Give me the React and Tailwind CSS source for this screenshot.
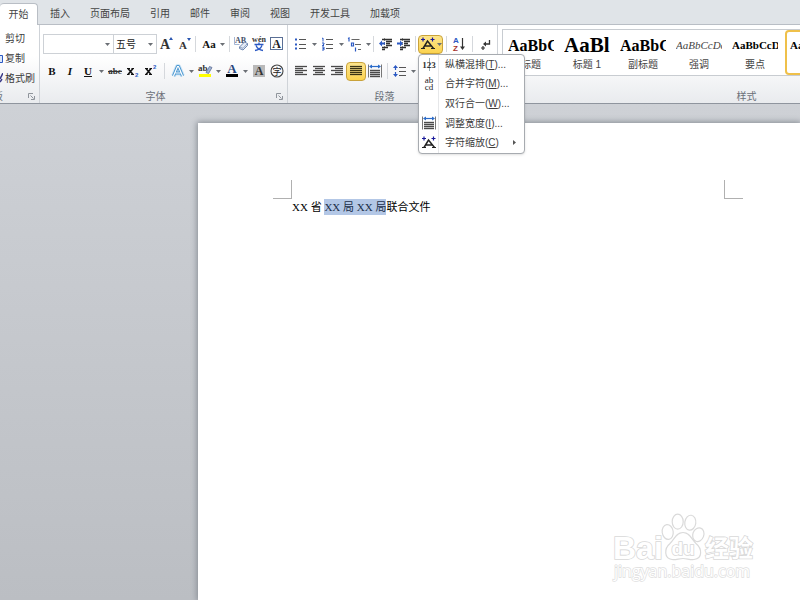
import React from "react";

const SERIF = "font-['Liberation_Serif','Noto_Sans_CJK_SC',serif]";

function Caret({ className = "" }) {
  return (
    <svg className={`shrink-0 ${className}`} width="5" height="3" viewBox="0 0 5 3" aria-hidden="true">
      <path d="M0 0h5L2.5 3z" fill="#6b6f75" />
    </svg>
  );
}

function Tool({ label, caret, className = "", children }) {
  return (
    <button type="button" aria-label={label} className={`flex h-5 shrink-0 items-center ${className}`}>
      <span className="flex w-[18px] items-center justify-center">{children}</span>
      {caret && (
        <span className="flex w-[9px] justify-center">
          <Caret />
        </span>
      )}
    </button>
  );
}

function Sep({ className = "mx-[3px]" }) {
  return <span className={`h-4 w-px shrink-0 bg-[#d5d8dc] ${className}`} />;
}

function Launcher() {
  return (
    <button type="button" aria-label="更多选项" className="shrink-0">
      <svg width="7" height="7" viewBox="0 0 7 7" fill="none" stroke="#8f949b">
        <path d="M.5 5V.5H5M2.5 2.5l3 3M6.5 3v3.5H3" />
      </svg>
    </button>
  );
}

function Group({ title, launcher, className = "", children }) {
  return (
    <section className={`flex shrink-0 flex-col border-r border-[#cfd3d8] ${className}`}>
      {children}
      <div className="mt-auto flex h-3.5 items-center px-1 text-[#6a7078]">
        <span className="flex-1 text-center">{title}</span>
        <span className="flex w-4 justify-end">{launcher && <Launcher />}</span>
      </div>
    </section>
  );
}

function Icon({ children }) {
  return (
    <svg width="16" height="16" viewBox="0 0 16 16" fill="none" aria-hidden="true">
      {children}
    </svg>
  );
}

const Lines = ({ d, fill }) => (
  <Icon>
    <path d={d} stroke="#4a4a4a" strokeOpacity=".3" strokeWidth="2" />
    <path d={d} stroke={fill || "#4a4a4a"} strokeWidth="1" />
  </Icon>
);

function GrowA({ up }) {
  return (
    <Icon>
      <text x={up ? 2 : 3} y="13" fontSize={up ? 14 : 11} fontWeight="bold" fill="#333" fontFamily="Liberation Serif">A</text>
      <path d={up ? "M11 4h4l-2-3z" : "M11 2h4l-2 3z"} fill="#2a56b0" />
    </Icon>
  );
}

function EraserIcon() {
  return (
    <Icon>
      <text x="2" y="7" fontSize="8" fontWeight="bold" fill="#44506a" fontFamily="Liberation Serif">AB</text>
      <path d="M1.500 1v7.500h5" stroke="#8ba3cb" strokeWidth=".8" />
      <path d="M6.500 11l5-5 3 1.500v2L10 14l-3.500-1.500z" fill="#e4ebf5" stroke="#6e87b0" />
      <path d="M6.500 11l3.500 1.300 4.500-4.800" stroke="#6e87b0" strokeWidth=".7" />
    </Icon>
  );
}

function PhoneticIcon() {
  return (
    <Icon>
      <text x="8" y="6" textAnchor="middle" fontSize="8" fontWeight="bold" fill="#333" fontFamily="Liberation Serif">wén</text>
      <path d="M8 6.500v2M3.500 8.500h9M5 9.500c1 2.500 3.500 4.500 7 5M11 9.500c-1 2.500-3.500 4.500-7 5" stroke="#2b59c3" strokeWidth="1.300" />
    </Icon>
  );
}

function BoxedA() {
  return (
    <Icon>
      <rect x="1.500" y="1.500" width="12" height="12" fill="#fff" stroke="#5a6f95" />
      <text x="7.500" y="12" textAnchor="middle" fontSize="12" fontWeight="bold" fill="#222" fontFamily="Liberation Serif">A</text>
    </Icon>
  );
}

function StrikeIcon() {
  return (
    <Icon>
      <text x="8" y="11" textAnchor="middle" fontSize="9" fontWeight="bold" fill="#333" fontFamily="Liberation Serif">abc</text>
      <path d="M1 8.500h14" stroke="#333" />
    </Icon>
  );
}

function ScriptX({ sup }) {
  return (
    <Icon>
      <path d="M3 5.500l5 6M8 5.500l-5 6" stroke="#111" strokeWidth="1.600" />
      <path d="M2 5.500h3M6.500 5.500H9M2 11.500h2.500M6 11.500h3" stroke="#111" strokeWidth="1" />
      <text x="10" y={sup ? 6 : 14} fontSize="6" fontWeight="bold" fill="#2b59c3" fontFamily="Liberation Sans">2</text>
    </Icon>
  );
}

function GlowA() {
  return (
    <Icon>
      <path d="M3.500 13L7.500 3.500h1L12.500 13M5 10h6" stroke="#cfe6f6" strokeWidth="5" strokeLinejoin="round" />
      <path d="M3.500 13L7.500 3.500h1L12.500 13M5 10h6" stroke="#4b97d0" strokeWidth="3.200" strokeLinejoin="round" />
      <path d="M3.500 13L7.500 3.500h1L12.500 13M5.500 10h5" stroke="#fff" strokeWidth="1.200" />
    </Icon>
  );
}

function HighlightIcon() {
  return (
    <Icon>
      <text x="1" y="8" fontSize="9" fontWeight="bold" fill="#333" fontFamily="Liberation Serif">ab</text>
      <path d="M9 9.500l3.500-6 2.500 1-3.500 6z" fill="#9fb4d8" stroke="#5f6f90" strokeWidth=".8" />
      <rect x="2" y="11" width="12" height="3" fill="#ffff00" />
    </Icon>
  );
}

function FontColorIcon() {
  return (
    <Icon>
      <text x="8" y="10" textAnchor="middle" fontSize="13" fontWeight="bold" fill="#27457c" fontFamily="Liberation Serif">A</text>
      <rect x="2" y="11" width="12" height="3" fill="#000" />
    </Icon>
  );
}

function ShadedA() {
  return (
    <Icon>
      <rect x="2" y="2" width="12" height="12" fill="#b9b9b9" />
      <text x="8" y="12" textAnchor="middle" fontSize="12" fontWeight="bold" fill="#333" fontFamily="Liberation Serif">A</text>
    </Icon>
  );
}

function CircledChar() {
  return (
    <Icon>
      <circle cx="8" cy="8" r="6" stroke="#444" strokeWidth="1.100" />
      <text x="8" y="11.500" textAnchor="middle" fontSize="9" fill="#222" fontFamily="Noto Sans CJK SC">字</text>
    </Icon>
  );
}

function ListIcon({ numbered }) {
  return (
    <Icon>
      <path d="M6 3.500h7M6 8.500h7M6 12.500h7" stroke="#555" strokeWidth="1.200" />
      {numbered ? (
        <path d="M2 2.500l1-.5V5.500M2 7h2v1.200L2.300 9.500H4M2 11h2v3H2M2.500 12.500H4" stroke="#2b59c3" strokeWidth="1" />
      ) : (
        <path d="M2 2.500h2v2H2zM2 7.500h2v2H2zM2 11.500h2v2H2z" fill="#2b59c3" />
      )}
    </Icon>
  );
}

function MultiListIcon() {
  return (
    <Icon>
      <path d="M4.500 3.500h8M8 8.500h6M11 13.500h3" stroke="#666" strokeWidth="1.200" />
      <path d="M1 2.500l1-.5V5.500M4.500 7h2v3h-2zM8.500 11.500v4" stroke="#2b59c3" strokeWidth="1.200" />
    </Icon>
  );
}

function IndentIcon({ right }) {
  return (
    <Icon>
      <path d="M4 3.500h10M8 5.500h6M8 7.500h4M8 9.500h6M4 11.500h6M4 13.500h3" stroke="#333" strokeWidth="1.400" />
      <path d="M6.500 2v12" stroke="#777" strokeDasharray="1 1" />
      <path d={right ? "M7 7.500l-3-3v2H1v2h3v2z" : "M1 7.500l3-3v2h3v2H4v2z"} fill="#2b59c3" />
    </Icon>
  );
}

function AsianLayoutIcon() {
  return (
    <Icon>
      <path d="M1 3.500h4M3 1.500v4M10.500 3.500h4M12.500 1.500v4" stroke="#18189a" strokeWidth="1.200" />
      <path d="M3 12.500L7.500 5l6 7.500M5 10h6" stroke="#222" strokeWidth="1.500" />
      <path d="M1 12.500h4M11 12.500h4" stroke="#222" strokeWidth="1.200" />
    </Icon>
  );
}

function SortIcon() {
  return (
    <Icon>
      <text x="2" y="7" fontSize="8" fontWeight="bold" fill="#2b59c3" fontFamily="Liberation Sans">A</text>
      <text x="2" y="15" fontSize="8" fontWeight="bold" fill="#a5322c" fontFamily="Liberation Sans">Z</text>
      <path d="M11.500 2v10" stroke="#333" strokeWidth="1.200" />
      <path d="M9 10.500h5L11.500 14z" fill="#333" />
    </Icon>
  );
}

function MarksIcon() {
  return (
    <Icon>
      <path d="M11.500 4v4H7" stroke="#333" strokeWidth="1.300" />
      <path d="M8 5.500v5L5 8z" fill="#333" />
      <path d="M3 12h4M5 10v4" stroke="#333" strokeWidth="1.200" />
    </Icon>
  );
}

function DistributeIcon() {
  return (
    <Icon>
      <path d="M1.500 1.500v13M14.500 1.500v13" stroke="#777" />
      <path d="M3 3.500h10" stroke="#2b6cc9" strokeWidth="1.200" />
      <path d="M2 3.500l3-2v4zM14 3.500l-3-2v4z" fill="#2b6cc9" />
      <path d="M3 7.500h10M3 9.500h10M3 11.500h10M3 13.500h10" stroke="#4a4a4a" strokeOpacity=".4" strokeWidth="2" />
      <path d="M3 7.500h10M3 9.500h10M3 11.500h10M3 13.500h10" stroke="#4a4a4a" strokeWidth="1" />
    </Icon>
  );
}

function SpacingIcon() {
  return (
    <Icon>
      <path d="M7 4.500h7M7 8.500h7M7 12.500h7" stroke="#555" strokeWidth="1.200" />
      <path d="M3.500 4v8" stroke="#2b59c3" strokeDasharray="3 2" strokeWidth="1.200" />
      <path d="M1 5L3.500 2 6 5zM1 11L3.500 14 6 11z" fill="#2b59c3" />
    </Icon>
  );
}

function Icon123() {
  return (
    <Icon>
      <path d="M8.500 2v13" stroke="#8ba0a8" strokeWidth=".9" />
      <text x="8" y="12" textAnchor="middle" fontSize="9" fontWeight="bold" fill="#333" fontFamily="Liberation Serif">123</text>
    </Icon>
  );
}

function IconAbcd() {
  return (
    <Icon>
      <text x="8" y="7" textAnchor="middle" fontSize="9" fill="#222" fontFamily="Liberation Serif">ab</text>
      <text x="8" y="14" textAnchor="middle" fontSize="9" fill="#222" fontFamily="Liberation Serif">cd</text>
    </Icon>
  );
}

const MENU = [
  { text: "纵横混排", hotkey: "T", tail: "...", icon: <Icon123 /> },
  { text: "合并字符", hotkey: "M", tail: "...", icon: <IconAbcd /> },
  { text: "双行合一", hotkey: "W", tail: "..." },
  { text: "调整宽度", hotkey: "I", tail: "...", icon: <DistributeIcon /> },
  { text: "字符缩放", hotkey: "C", tail: "", icon: <AsianLayoutIcon />, sub: true },
];

function AsianLayoutMenu() {
  return (
    <div
      role="menu"
      className="absolute left-0 top-[19px] z-10 grid h-[100px] w-[107px] grid-rows-5 rounded-sm border border-[#a7abb0] bg-white shadow-sm"
    >
      {MENU.map((m) => (
        <button key={m.text} type="button" role="menuitem" className="flex items-center whitespace-nowrap text-left text-[#3c3c3c]">
          <span className="flex h-full w-5 items-center justify-center border-r border-[#e6e7e9]">{m.icon}</span>
          <span className="ml-1.5 flex-1">
            {m.text}(<u>{m.hotkey}</u>){m.tail}
          </span>
          {m.sub && (
            <svg className="mr-2" width="3" height="5" viewBox="0 0 3 5">
              <path d="M0 0v5l3-2.500z" fill="#555" />
            </svg>
          )}
        </button>
      ))}
    </div>
  );
}

const TABS = ["插入", "页面布局", "引用", "邮件", "审阅", "视图", "开发工具", "加载项"];

function Tabs() {
  return (
    <nav className="flex h-[25px] shrink-0 items-end border-b border-[#b9bec5] bg-[#e0e4e8] text-[#444]">
      <button type="button" className="-mb-px h-[22px] w-[38px] shrink-0 rounded-t-sm border border-b-0 border-l-0 border-[#b9bec5] bg-white">
        开始
      </button>
      <div className="ml-0.5 flex">
        {TABS.map((t) => (
          <button key={t} type="button" className="h-[22px] whitespace-nowrap px-2.5">
            {t}
          </button>
        ))}
      </div>
    </nav>
  );
}

function ClipboardGroup() {
  return (
    <section className="flex w-10 shrink-0 flex-col overflow-hidden whitespace-nowrap border-r border-[#cfd3d8] pt-[3px] text-[#3c3c3c]">
      <button type="button" className="flex h-5 items-center pl-[5px]">剪切</button>
      <button type="button" className="flex h-5 items-center gap-0.5">
        <svg width="3" height="10" viewBox="0 0 3 10">
          <path d="M0 2.500h2.500v7H0" fill="#dce8fa" stroke="#2b59c3" />
        </svg>
        复制
      </button>
      <button type="button" className="flex h-5 items-center gap-0.5">
        <svg width="3" height="10" viewBox="0 0 3 10">
          <path d="M0 6L3 0M0 9l2-3" stroke="#3c3c8a" strokeWidth="1.500" />
        </svg>
        格式刷
      </button>
      <div className="mt-auto flex h-3.5 items-center justify-between pr-1 text-[#6a7078]">
        <span className="flex w-[3px] justify-end overflow-hidden">板</span>
        <Launcher />
      </div>
    </section>
  );
}

function Combo({ label, value, className }) {
  return (
    <label className={`relative flex h-5 shrink-0 items-center border border-[#cdd1d6] bg-white ${className}`}>
      <select aria-label={label} defaultValue={value} className="h-full w-full appearance-none bg-transparent pl-0.5 text-[#222] outline-none">
        <option value={value}>{value}</option>
      </select>
      <Caret className="pointer-events-none absolute right-[3px]" />
    </label>
  );
}

function FontGroup() {
  const letter = `text-[11px] font-bold text-[#111] ${SERIF}`;
  return (
    <Group title="字体" launcher className="w-[248px]">
      <div className="flex items-center pl-[3px] pt-[9px]">
        <Combo label="字体" value="" className="w-[71px]" />
        <Combo label="字号" value="五号" className="w-[43px] border-l-0" />
        <Tool label="增大字体"><GrowA up /></Tool>
        <Tool label="缩小字体"><GrowA /></Tool>
        <Sep className="mx-0.5" />
        <Tool label="更改大小写" caret className="ml-0.5"><span className={letter}>Aa</span></Tool>
        <Sep className="mx-0.5" />
        <Tool label="清除格式"><EraserIcon /></Tool>
        <Tool label="拼音指南"><PhoneticIcon /></Tool>
        <Tool label="字符边框"><BoxedA /></Tool>
      </div>
      <div className="flex items-center pl-[3px] pt-[7px]">
        <Tool label="加粗"><span className={letter}>B</span></Tool>
        <Tool label="倾斜"><span className={`italic ${letter}`}>I</span></Tool>
        <Tool label="下划线" caret><span className={`underline ${letter}`}>U</span></Tool>
        <Tool label="删除线"><StrikeIcon /></Tool>
        <Tool label="下标"><ScriptX /></Tool>
        <Tool label="上标"><ScriptX sup /></Tool>
        <Sep className="mx-1" />
        <Tool label="文本效果" caret><GlowA /></Tool>
        <Tool label="突出显示" caret><HighlightIcon /></Tool>
        <Tool label="字体颜色" caret><FontColorIcon /></Tool>
        <Tool label="字符底纹"><ShadedA /></Tool>
        <Tool label="带圈字符"><CircledChar /></Tool>
      </div>
    </Group>
  );
}

function ParagraphGroup() {
  const active = "border border-[#c9a23a] rounded-sm bg-linear-to-b from-[#fde58a] to-[#fbd34e]";
  return (
    <Group title="段落" className="w-[210px]">
      <div className="flex items-center pl-1 pt-[9px]">
        <Tool label="项目符号" caret><ListIcon /></Tool>
        <Tool label="编号" caret><ListIcon numbered /></Tool>
        <Tool label="多级列表" caret><MultiListIcon /></Tool>
        <Sep className="mr-[3px]" />
        <Tool label="减少缩进量"><IndentIcon /></Tool>
        <Tool label="增加缩进量"><IndentIcon right /></Tool>
        <Sep className="mx-0.5" />
        <div className="relative">
          <button type="button" aria-label="中文版式" className={`flex h-[19px] w-[25px] items-center justify-center gap-px ${active}`}>
            <AsianLayoutIcon />
            <Caret />
          </button>
          <AsianLayoutMenu />
        </div>
        <Sep />
        <Tool label="排序"><SortIcon /></Tool>
        <Sep className="mx-1" />
        <Tool label="显示编辑标记"><MarksIcon /></Tool>
      </div>
      <div className="flex items-center pl-1 pt-[7px]">
        <Tool label="左对齐"><Lines d="M2 3.500h12M2 5.500h8M2 7.500h12M2 9.500h8M2 11.500h12" /></Tool>
        <Tool label="居中"><Lines d="M2 3.500h12M4 5.500h8M2 7.500h12M4 9.500h8M2 11.500h12" /></Tool>
        <Tool label="右对齐"><Lines d="M2 3.500h12M6 5.500h8M2 7.500h12M6 9.500h8M2 11.500h12" /></Tool>
        <button type="button" aria-label="两端对齐" className={`flex h-[19px] w-5 shrink-0 items-center justify-center ${active}`}>
          <Lines fill="#3a3413" d="M2 3.500h12M2 5.500h12M2 7.500h12M2 9.500h12M2 11.500h12" />
        </button>
        <Tool label="分散对齐"><DistributeIcon /></Tool>
        <Sep />
        <Tool label="行距" caret><SpacingIcon /></Tool>
      </div>
    </Group>
  );
}

const STYLES = [
  { sample: "AaBbC", name: "标题", look: "text-[16px] font-bold text-black" },
  { sample: "AaBl", name: "标题 1", look: "text-[21px] font-bold text-black" },
  { sample: "AaBbC", name: "副标题", look: "text-[16px] font-bold text-black" },
  { sample: "AaBbCcDc", name: "强调", look: "text-[11px] italic text-[#444]" },
  { sample: "AaBbCcD", name: "要点", look: "text-[11px] font-bold text-black" },
];

function StyleGroup() {
  return (
    <Group title="样式" className="min-w-[514px] flex-1">
      <div className="ml-1 mt-1 flex h-[47px] border border-[#c8ccd1] bg-white">
        {STYLES.map((s, i) => (
          <button key={i} type="button" className="flex w-14 shrink-0 flex-col items-center text-[#444]">
            <span className={`flex h-[29px] w-[46px] items-center overflow-hidden pt-0.5 ${SERIF} ${s.look}`}>{s.sample}</span>
            <span className="leading-[12px]">{s.name}</span>
          </button>
        ))}
        <button type="button" className="ml-0.5 flex w-14 shrink-0 flex-col items-center rounded-sm border-2 border-[#efc04a] text-[#444]">
          <span className={`flex h-[27px] w-[46px] items-center text-[11px] font-bold text-black ${SERIF}`}>AaBbCcD</span>
          <span className="leading-[12px]">引用</span>
        </button>
      </div>
    </Group>
  );
}

function Watermark() {
  const outline = { fill: "#fff", stroke: "#d8d8d8", strokeWidth: 1.6, paintOrder: "stroke" };
  return (
    <svg className="absolute bottom-4 right-10" width="150" height="74" viewBox="0 0 150 74">
      <text x="3" y="49" fontSize="32" fontWeight="bold" fontFamily="Liberation Sans" {...outline}>Bai</text>
      <g fill="#fff" stroke="#dadada" strokeWidth="1.200">
        <ellipse cx="57.700" cy="22" rx="5.500" ry="7.500" transform="rotate(-8 57.700 22)" />
        <ellipse cx="67.700" cy="11.700" rx="5.500" ry="7.500" />
        <ellipse cx="80.300" cy="12.700" rx="5.500" ry="7.500" transform="rotate(8 80.300 12.700)" />
        <ellipse cx="88.300" cy="24.700" rx="5.500" ry="7" transform="rotate(20 88.300 24.700)" />
        <path d="M73 22.500c-7 0-8.500 7-13 11-6 5-6 15 2 16 4 .5 7-1 11-1s7 1.500 11 1c9-1 8-11 2-16-4.500-4-6-11-13-11z" />
      </g>
      <text x="73" y="45" textAnchor="middle" fontSize="19" fontWeight="bold" fontFamily="Liberation Sans" {...outline}>du</text>
      <text x="95" y="47" fontSize="24" fontWeight="bold" fontFamily="Noto Sans CJK SC" {...outline}>经验</text>
      <text x="4" y="67" fontSize="16" fontFamily="Open Sans" fill="#fff" stroke="#dedede" strokeWidth="1.400" paintOrder="stroke">jingyan.baidu.com</text>
    </svg>
  );
}

function Document() {
  return (
    <main className="flex flex-1 bg-linear-to-b from-[#ced1d6] to-[#bbbec3] pl-[198px] pt-[19px]">
      <article className="relative flex-1 bg-white pl-[75px] pt-[57px] shadow-[0_0_6px_1px_#858b92]">
        <div className="flex justify-between pr-[57px]">
          <span className="size-[19px] border-b border-r border-[#b0b0b0]" />
          <span className="size-[19px] border-b border-l border-[#b0b0b0]" />
        </div>
        <p className={`ml-[19px] whitespace-nowrap text-[11px] leading-4 text-black ${SERIF}`}>
          XX 省 <mark className="inline-block bg-[#b3c7e6] text-[#1c2f4a]">XX 局 XX 局</mark>联合文件
        </p>
        <Watermark />
      </article>
    </main>
  );
}

export default function App() {
  return (
    <div className="flex min-h-screen flex-col overflow-hidden font-['Liberation_Sans','Noto_Sans_CJK_SC',sans-serif] text-[10px]">
      <Tabs />
      <header className="relative z-10 flex h-[79px] shrink-0 border-b border-[#8f959e] bg-linear-to-b from-white from-40% to-[#e9ebee]">
        <ClipboardGroup />
        <FontGroup />
        <ParagraphGroup />
        <StyleGroup />
      </header>
      <Document />
    </div>
  );
}
